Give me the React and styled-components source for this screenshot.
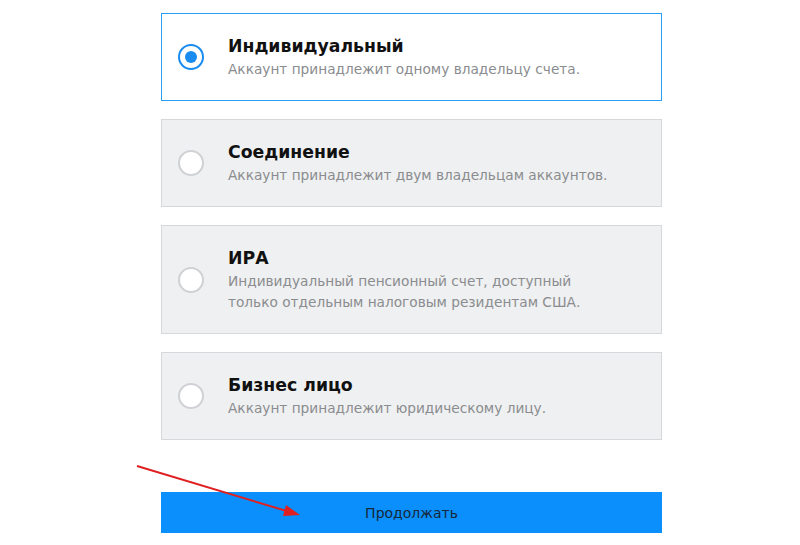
import React, { useState } from 'react';
import styled, { createGlobalStyle } from 'styled-components';

const GlobalStyle = createGlobalStyle`
  html, body {
    margin: 0;
    padding: 0;
    background: #ffffff;
    font-family: "DejaVu Sans", "Noto Sans", sans-serif;
  }
`;

const Page = styled.div`
  position: relative;
  width: 800px;
  height: 545px;
  overflow: hidden;
  padding: 13px 0 0 161px;
  box-sizing: border-box;
`;

const List = styled.div`
  width: 501px;
  display: flex;
  flex-direction: column;
  gap: 18px;
`;

const Card = styled.label`
  display: flex;
  align-items: center;
  box-sizing: border-box;
  min-height: 88px;
  padding: 20px 16px;
  border: 1px solid ${props => (props.active ? '#2a9df4' : '#d6d8db')};
  background: ${props => (props.active ? '#ffffff' : '#eff0f1')};
  cursor: pointer;
`;

const Radio = styled.span`
  flex: 0 0 auto;
  width: 26px;
  height: 26px;
  box-sizing: border-box;
  border-radius: 50%;
  border: 2px solid ${props => (props.active ? '#1a8cf0' : '#cfd1d4')};
  background: #ffffff;
  display: flex;
  align-items: center;
  justify-content: center;
  margin-right: 24px;
  &::after {
    content: '';
    display: ${props => (props.active ? 'block' : 'none')};
    width: 12px;
    height: 12px;
    border-radius: 50%;
    background: #1a8cf0;
  }
`;

const Body = styled.div`
  display: flex;
  flex-direction: column;
`;

const Title = styled.div`
  font-weight: 700;
  font-size: 17.3px;
  line-height: 25px;
  color: #111111;
`;

const Desc = styled.div`
  font-size: 13.7px;
  line-height: 21px;
  color: #8a8c8f;
  white-space: pre-line;
`;

const Continue = styled.button`
  margin-top: 52px;
  width: 501px;
  height: 41px;
  border: 0;
  background: #0a8ffc;
  color: #16283a;
  font-family: "DejaVu Sans", "Noto Sans", sans-serif;
  font-size: 14px;
  cursor: pointer;
  &:focus {
    outline: none;
  }
`;

const Arrow = styled.svg`
  position: absolute;
  left: 0;
  top: 0;
  pointer-events: none;
`;

const options = [
  { id: 'single', title: 'Индивидуальный', text: 'Аккаунт принадлежит одному владельцу счета.' },
  { id: 'joint', title: 'Соединение', text: 'Аккаунт принадлежит двум владельцам аккаунтов.' },
  { id: 'ira', title: 'ИРА', text: 'Индивидуальный пенсионный счет, доступный\nтолько отдельным налоговым резидентам США.' },
  { id: 'biz', title: 'Бизнес лицо', text: 'Аккаунт принадлежит юридическому лицу.' }
];

export default function App() {
  const [selected, setSelected] = useState('single');
  return (
    <Page>
      <GlobalStyle />
      <List>
        {options.map(o => (
          <Card key={o.id} active={selected === o.id} onClick={() => setSelected(o.id)}>
            <Radio active={selected === o.id} />
            <Body>
              <Title>{o.title}</Title>
              <Desc>{o.text}</Desc>
            </Body>
          </Card>
        ))}
      </List>
      <Continue type="button">Продолжать</Continue>
      <Arrow width="800" height="545" viewBox="0 0 800 545">
        <line x1="137" y1="466" x2="290" y2="512" stroke="#e02020" strokeWidth="2" />
        <polygon points="300,515 286,505 283,516" fill="#e02020" />
      </Arrow>
    </Page>
  );
}
